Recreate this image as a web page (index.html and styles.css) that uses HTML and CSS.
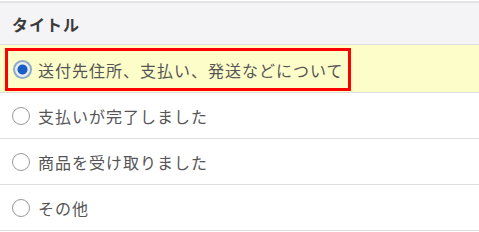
FILE: index.html
```html
<!DOCTYPE html>
<html lang="ja">
<head>
    <meta charset="UTF-8">
    <meta name="viewport" content="width=device-width, initial-scale=1.0">
    <title>タイトル</title>
    <link rel="stylesheet" href="styles.css">
</head>
<body>

    <div class="list">
        <div class="list-head">タイトル</div>

        <!-- 選択中の項目 -->
        <div class="row selected">
            <label class="choice marked">
                <span class="radio on"></span>
                送付先住所、支払い、発送などについて
            </label>
        </div>

        <div class="row">
            <label class="choice">
                <span class="radio"></span>
                支払いが完了しました
            </label>
        </div>
        <div class="row">
            <label class="choice">
                <span class="radio"></span>
                商品を受け取りました
            </label>
        </div>
        <div class="row">
            <label class="choice">
                <span class="radio"></span>
                その他
            </label>
        </div>
    </div>

</body>
</html>
```

FILE: styles.css
```css
body {
    margin: 0;
    padding-top: 1px;
    background-color: #fff;
    font-family: "Noto Sans CJK JP", "Noto Sans", sans-serif;
    color: #555;
}

.list {
    border-top: 2px solid #e2e2e4;
}

.list-head {
    height: 41px;
    display: flex;
    align-items: center;
    padding-left: 12px;
    background-color: #f4f4f6;
    border-bottom: 1px solid #e0e0e0;
    font-size: 16px;
    font-weight: bold;
    color: #3a3a3a;
    letter-spacing: 1px;
}

.row {
    height: 45px;
    display: flex;
    align-items: center;
    border-bottom: 1px solid #dedede;
}

.row.selected {
    height: 47px;
    background-color: #fdfdc9;
    align-items: flex-start;
}

.choice {
    display: flex;
    align-items: center;
    padding-left: 12px;
    font-size: 16px;
    letter-spacing: 1px;
}

.choice.marked {
    margin: 3px 0 0 5px;
    height: 37px;
    padding: 0 4px 0 5px;
    border: 3px solid #f00;
}

.radio {
    width: 18px;
    height: 18px;
    box-sizing: border-box;
    border: 1px solid #999;
    border-radius: 50%;
    background-color: #fff;
    margin-right: 8px;
    flex-shrink: 0;
}

.radio.on {
    border: 2px solid #8fa9c8;
    background: radial-gradient(circle, #1b5dc4 0, #1b5dc4 4.5px, #e8eef6 5.5px);
    width: 19px;
    height: 19px;
    margin-right: 6px;
}
```
